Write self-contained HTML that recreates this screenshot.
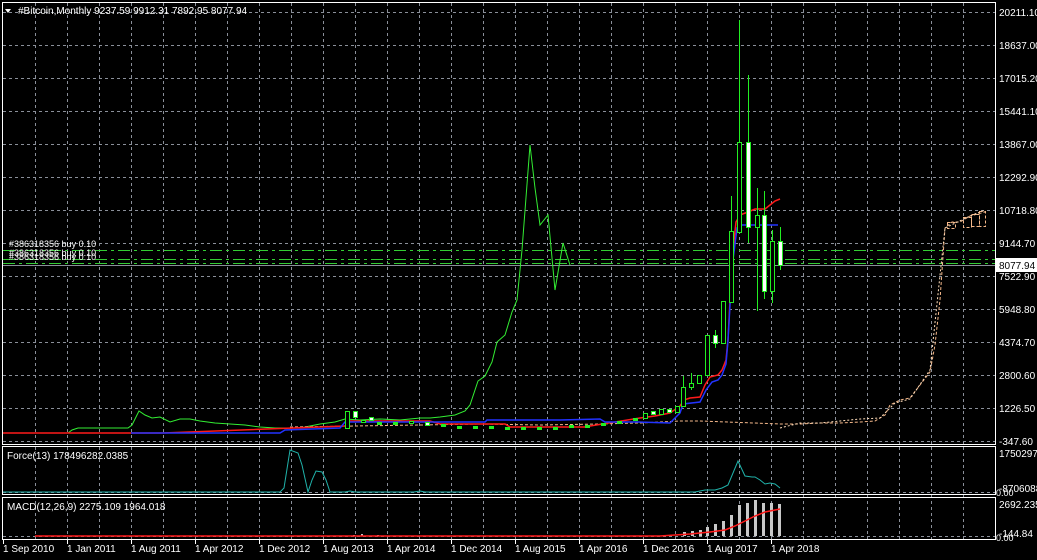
<!DOCTYPE html>
<html><head><meta charset="utf-8"><style>
html,body{margin:0;padding:0;background:#000;width:1037px;height:560px;overflow:hidden}
svg{display:block}
text{font-family:"Liberation Sans",sans-serif;font-size:10px;fill:#fff}
</style></head><body>
<svg width="1037" height="560" viewBox="0 0 1037 560" xmlns="http://www.w3.org/2000/svg">
<rect width="1037" height="560" fill="#000"/>
<g stroke="#8a8f99" stroke-width="1" stroke-dasharray="3,3" fill="none">
<path d="M35.5 3V540M67.5 3V540M99.5 3V540M131.5 3V540M163.5 3V540M195.5 3V540M227.5 3V540M259.5 3V540M291.5 3V540M323.5 3V540M355.5 3V540M387.5 3V540M419.5 3V540M451.5 3V540M483.5 3V540M515.5 3V540M547.5 3V540M579.5 3V540M611.5 3V540M643.5 3V540M675.5 3V540M707.5 3V540M739.5 3V540M771.5 3V540M803.5 3V540M835.5 3V540M867.5 3V540M899.5 3V540M931.5 3V540M963.5 3V540"/>
<path d="M3 12.5H995M3 45.5H995M3 78.5H995M3 111.5H995M3 144.5H995M3 177.5H995M3 210.5H995M3 243.5H995M3 276.5H995M3 309.5H995M3 342.5H995M3 375.5H995M3 408.5H995M3 441.5H995M3 492.5H995M3 536.5H995"/>
</g>
<g stroke="#fff" stroke-width="1" fill="none">
<rect x="2.5" y="2.5" width="993" height="442"/>
<rect x="2.5" y="446.5" width="993" height="48"/>
<rect x="2.5" y="497.5" width="993" height="42"/>
</g>
<g stroke="#33cc33" stroke-width="1" stroke-dasharray="12,4,3,4" fill="none">
<path d="M3 250.5H995M3 259.5H995M3 263.5H995"/>
</g>
<path d="M3 265.5H995" stroke="#8a8f99"/>
<text x="9" y="247" style="font-size:9px">#386318356 buy 0.10</text>
<text x="9" y="256" style="font-size:9px">#386318356 buy 0.10</text>
<text x="9" y="260" style="font-size:9px">#386318356 buy 0.10</text>
<polyline fill="none" stroke="#33ee33" stroke-width="1" points="3,433 68,433 72,430 78,428 128,428 132,425 139,411 145,415 152,418 160,417 170,422 180,419 190,419 200,421 215,423 230,424 245,425 260,427 275,428 290,428 300,428 310,426 320,424 335,422 345,419 360,420 380,419 400,420 420,418 430,418 440,417 455,415 465,411 470,405 478,381 485,376 492,362 497,342 505,335 512,312 517,300 522,250 530,145 535,188 540,225 548,215 555,290 563,243 570,265"/>
<polyline fill="none" stroke="#f5b88a" stroke-width="1" stroke-dasharray="3,2" points="290,427 420,425 480,424 540,425 600,424 640,423 680,421 700,421 780,424 800,424 820,423 840,423 860,422 875,421 885,415 890,405 900,400 910,398 920,385 930,372 935,345 940,300 945,228 952,222 960,222 970,216 985,212"/>
<polyline fill="none" stroke="#ffddbb" stroke-width="1" stroke-dasharray="2,2" points="780,428 800,423 820,423 840,421 860,419 880,418 895,403 910,399 930,370 945,228 970,216 985,210"/>
<g fill="none" stroke="#f5b88a" stroke-width="1" stroke-dasharray="3,2">
<rect x="947.5" y="222.5" width="8" height="6"/><rect x="963.5" y="217.5" width="8" height="10"/><rect x="971.5" y="214.5" width="8" height="12"/><rect x="979.5" y="211.5" width="6" height="15"/>
</g>
<polyline fill="none" stroke="#ff1a1a" stroke-width="1.5" points="3,433 163,433 345,426 350,421 430,421 440,424 505,424 510,427 585,427 590,426 640,418 655,416 670,413 680,406 684,400 690,398 700,397 705,385 710,377 718,375 722,370 726,360 728,340 730,300 733,250 736,222 740,215 748,212 755,209 765,209 770,205 775,201 780,199"/>
<polyline fill="none" stroke="#2233ff" stroke-width="1.5" points="131,433 280,433 285,430 340,428 345,422 485,422 487,420 560,420 600,419 605,422 637,422 670,423 675,418 680,413 683,404 700,402 706,390 712,382 718,380 722,375 726,364 728,340 730,305 733,260 737,228 740,225 778,225"/>
<g stroke="#22ee22" stroke-width="1" fill="#000">
<rect x="345.5" y="411.5" width="4" height="17"/>
<rect x="361.5" y="420.5" width="4" height="2"/>
<rect x="377.5" y="422.5" width="4" height="2" fill="#22ee22"/>
<rect x="393.5" y="422.5" width="4" height="2" fill="#22ee22"/>
<rect x="409.5" y="421.5" width="4" height="2"/>
<rect x="441.5" y="424.5" width="4" height="2" fill="#22ee22"/>
<rect x="457.5" y="426.5" width="4" height="2" fill="#22ee22"/>
<rect x="473.5" y="426.5" width="4" height="2" fill="#22ee22"/>
<rect x="489.5" y="426.5" width="4" height="2" fill="#22ee22"/>
<rect x="505.5" y="427.5" width="4" height="2" fill="#22ee22"/>
<rect x="521.5" y="427.5" width="4" height="2" fill="#22ee22"/>
<rect x="537.5" y="427.5" width="4" height="2" fill="#22ee22"/>
<rect x="553.5" y="427.5" width="4" height="2" fill="#22ee22"/>
<rect x="569.5" y="425.5" width="4" height="2" fill="#22ee22"/>
<rect x="585.5" y="425.5" width="4" height="2" fill="#22ee22"/>
<rect x="601.5" y="423.5" width="4" height="2" fill="#22ee22"/>
<rect x="617.5" y="421.5" width="4" height="2" fill="#22ee22"/>
<rect x="633.5" y="418.5" width="4" height="2" fill="#22ee22"/>
<rect x="643.5" y="413.5" width="4" height="5"/>
<rect x="659.5" y="409.5" width="4" height="5"/>
<rect x="675.5" y="406.5" width="4" height="6"/>
<path d="M683.5 376V387M691.5 373V390M715.5 330V348M731.5 196V231M739.5 20V142M748.5 75V142M748.5 227V243M757.5 188V311M764.5 191V299M772.5 230V303M780.5 227V270" fill="none"/>
<rect x="681.5" y="387.5" width="4" height="19"/>
<rect x="689.5" y="383.5" width="4" height="4"/>
<rect x="697.5" y="375.5" width="4" height="8"/>
<rect x="705.5" y="335.5" width="4" height="40"/>
<rect x="721.5" y="301.5" width="4" height="42"/>
<rect x="729.5" y="231.5" width="4" height="71"/>
<rect x="737.5" y="142.5" width="4" height="90"/>
<rect x="755.5" y="215.5" width="4" height="12"/>
<rect x="770.5" y="241.5" width="4" height="50"/>
</g>
<g stroke="#22ee22" stroke-width="1" fill="#fff">
<rect x="353.5" y="411.5" width="4" height="6"/>
<rect x="369.5" y="417.5" width="4" height="3"/>
<rect x="425.5" y="422.5" width="4" height="3"/>
<rect x="651.5" y="411.5" width="4" height="3"/>
<rect x="667.5" y="409.5" width="4" height="3"/>
<rect x="713.5" y="335.5" width="4" height="8"/>
<rect x="746.5" y="142.5" width="4" height="85"/>
<rect x="762.5" y="215.5" width="4" height="76"/>
<rect x="778.5" y="241.5" width="4" height="24"/>
</g>
<polyline fill="none" stroke="#20b2aa" stroke-width="1" points="3,492 280,492 284,488 290,450 298,453 302,465 308,492 312,480 316,471 322,472 326,480 330,492 345,492 350,491 355,492 414,492 420,491 425,492 695,492 705,490 715,490 722,488 728,485 733,473 738,461 745,476 752,477 755,477 760,480 765,484 770,483 775,484 780,488"/>
<g fill="#c8c8c8">
<rect x="683" y="532" width="3" height="4"/><rect x="691" y="531" width="3" height="5"/><rect x="699" y="530" width="3" height="6"/><rect x="706" y="527" width="3" height="9"/><rect x="714" y="524" width="3" height="12"/><rect x="722" y="521" width="3" height="15"/><rect x="730" y="515" width="3" height="21"/><rect x="738" y="505" width="3" height="31"/><rect x="746" y="503" width="3" height="33"/><rect x="754" y="500" width="3" height="36"/><rect x="762" y="503" width="3" height="33"/><rect x="770" y="503" width="3" height="33"/><rect x="778" y="504" width="3" height="32"/>
<rect x="353" y="535" width="2" height="1"/><rect x="361" y="534" width="2" height="2"/><rect x="377" y="535" width="2" height="1"/>
</g>
<polyline fill="none" stroke="#ff1a1a" stroke-width="1.5" points="35,536 660,536 690,534 710,532 725,530 735,526 745,521 755,516 765,512 780,509"/>
<g>
<text x="999" y="16">20211.10</text>
<text x="999" y="49">18637.00</text>
<text x="999" y="82">17015.20</text>
<text x="999" y="115">15441.10</text>
<text x="999" y="148">13867.00</text>
<text x="999" y="181">12292.90</text>
<text x="999" y="214">10718.80</text>
<text x="999" y="247">9144.70</text>
<text x="999" y="280">7522.90</text>
<text x="999" y="313">5948.80</text>
<text x="999" y="346">4374.70</text>
<text x="999" y="379">2800.60</text>
<text x="999" y="412">1226.50</text>
<text x="999" y="445">-347.60</text>
<text x="999" y="457">17502974</text>
<text x="999" y="492">-8706088</text>
<text x="996" y="496" style="font-size:9px">0.00</text>
<text x="999" y="508">2692.235</text>
<text x="999" y="537">-144.84</text>
<text x="996" y="541" style="font-size:9px">0.00</text>
</g>
<rect x="996" y="258" width="41" height="14" fill="#fff"/>
<text x="999" y="269" style="fill:#000">8077.94</text>
<path d="M5 9H11L8 13Z" fill="#fff"/>
<text x="18" y="14">#Bitcoin,Monthly  9237.59 9912.31 7892.95 8077.94</text>
<text x="7" y="459">Force(13) 178496282.0385</text>
<text x="7" y="510">MACD(12,26,9) 2275.109 1964.018</text>
<g stroke="#fff"><path d="M3.5 540V544M67.5 540V544M131.5 540V544M195.5 540V544M259.5 540V544M323.5 540V544M387.5 540V544M451.5 540V544M515.5 540V544M579.5 540V544M643.5 540V544M707.5 540V544M771.5 540V544"/></g>
<g>
<text x="3" y="552">1 Sep 2010</text><text x="67" y="552">1 Jan 2011</text><text x="131" y="552">1 Aug 2011</text><text x="195" y="552">1 Apr 2012</text><text x="259" y="552">1 Dec 2012</text><text x="323" y="552">1 Aug 2013</text><text x="387" y="552">1 Apr 2014</text><text x="451" y="552">1 Dec 2014</text><text x="515" y="552">1 Aug 2015</text><text x="579" y="552">1 Apr 2016</text><text x="643" y="552">1 Dec 2016</text><text x="707" y="552">1 Aug 2017</text><text x="771" y="552">1 Apr 2018</text>
</g>
</svg>
</body></html>
